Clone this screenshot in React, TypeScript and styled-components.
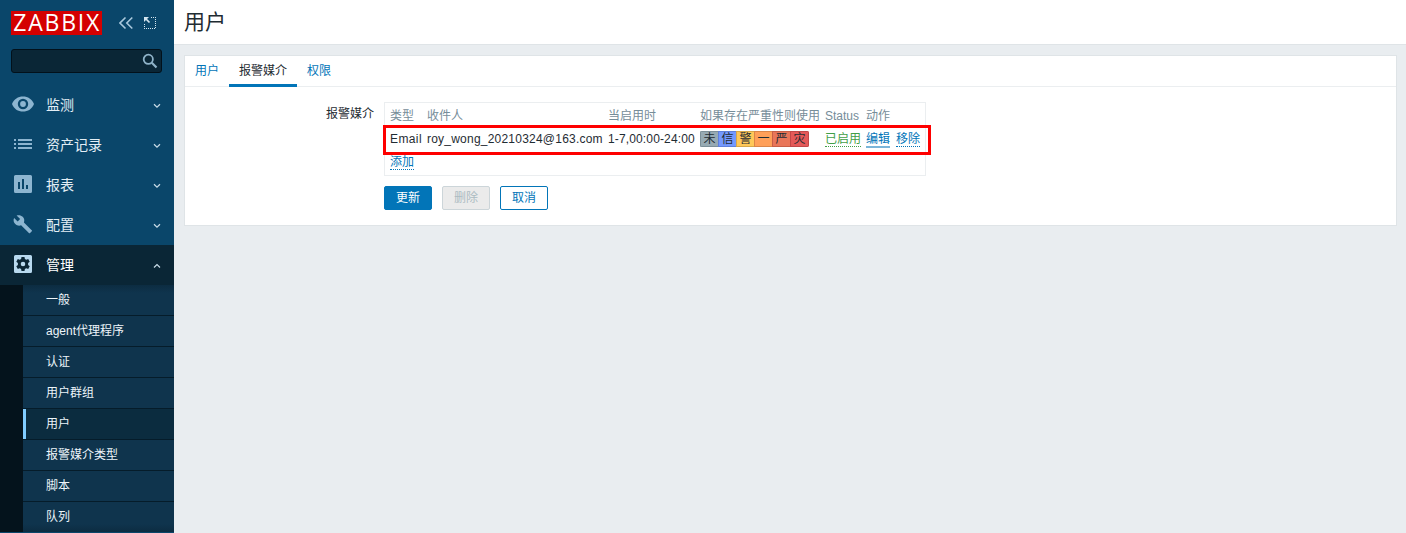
import React from "react";
import styled, { createGlobalStyle, css } from "styled-components";

const Global = createGlobalStyle`
  * { box-sizing: border-box; }
  body {
    margin: 0;
    background: #e9edf0;
    color: #1f2c33;
    font: 12px/14px "Liberation Sans", "Noto Sans CJK SC", sans-serif;
    overflow: hidden;
  }
`;

const Page = styled.div`
  display: flex;
  height: 533px;
`;
const Sidebar = styled.aside`
  flex: 0 0 174px;
  background: #0a466a;
  overflow: hidden;
`;
const Brand = styled.div`
  display: flex;
  align-items: center;
  padding: 11px 0 0 11px;
  height: 35px;
  svg { display: block; }
`;
const Logo = styled.svg`
  overflow: visible;
`;
const Collapse = styled.svg`
  margin-left: 17px;
`;
const Compact = styled.svg`
  margin-left: 10px;
`;
const Search = styled.div`
  display: flex;
  align-items: center;
  justify-content: flex-end;
  width: 151px;
  height: 24px;
  margin: 14px 0 12px 11px;
  padding-right: 3px;
  background: #0a2636;
  border: 1px solid #02111b;
  border-radius: 3px;
`;
const MenuItem = styled.div<{ $active?: boolean }>`
  display: flex;
  align-items: center;
  height: 40px;
  padding: 0 12px 0 11px;
  font-size: 14px;
  color: ${(p) => (p.$active ? "#fff" : "#e3eef5")};
  background: ${(p) => (p.$active ? "#0a2636" : "transparent")};
  fill: ${(p) => (p.$active ? "#b8d9ef" : "#8db5d0")};
`;
const MenuIcon = styled.svg`
  margin-bottom: 2px;
`;
const MenuLabel = styled.span`
  flex: 1;
  margin-left: 11px;
`;
const Submenu = styled.div`
  height: 247px;
  padding-left: 23px;
  background: #04131c;
`;
const SubItem = styled.div<{ $active?: boolean }>`
  display: flex;
  align-items: center;
  height: 31px;
  padding-left: 23px;
  border-bottom: 1px solid #051c2a;
  box-shadow: ${(p) => (p.$active ? "inset 3px 0 #80ccff" : "none")};
  background: ${(p) => (p.$active ? "#0b2c3f" : "#0f344d")};
  color: #edf5fa;
  &:first-child { background: linear-gradient(#0c2c41, #0f344d 8px); }
  &:last-child { height: 30px; border-bottom: 0; background: linear-gradient(#0f344d 22px, #0c2c41); }
`;
const Main = styled.main`
  flex: 1;
  min-width: 0;
`;
const Header = styled.header`
  height: 45px;
  padding: 10px;
  background: #fff;
  border-bottom: 1px solid #dfe4e7;
`;
const Title = styled.h1`
  margin: 0;
  font-size: 21px;
  line-height: 24px;
  font-weight: 400;
`;
const Panel = styled.section`
  height: 171px;
  margin: 10px 9px 0 10px;
  background: #fff;
  border: 1px solid #dfe4e7;
`;
const Tabs = styled.nav`
  display: flex;
  height: 31px;
  border-bottom: 1px solid #ebeef0;
`;
const Tab = styled.a<{ $active?: boolean }>`
  height: 31px;
  padding: 8px 10px 0;
  color: ${(p) => (p.$active ? "#1f2c33" : "#0275b8")};
  border-bottom: 3px solid ${(p) => (p.$active ? "#0275b8" : "transparent")};
`;
const FormRow = styled.div`
  display: flex;
  padding-top: 15px;
`;
const Label = styled.label`
  width: 189px;
  padding-top: 5px;
  text-align: right;
`;
const Media = styled.div`
  position: relative;
  width: 542px;
  height: 74px;
  margin-left: 10px;
  padding-left: 5px;
  border: 1px solid #ebeef0;
`;
const Row = styled.div<{ $head?: boolean }>`
  display: grid;
  grid-template-columns: 37px 181px 92px 125px 41px 60px;
  align-items: ${(p) => (p.$head ? "center" : "start")};
  height: ${(p) => (p.$head ? 25 : 22)}px;
  padding-top: ${(p) => (p.$head ? 0 : 3)}px;
  color: ${(p) => (p.$head ? "#768d99" : "#1f2c33")};
  white-space: nowrap;
`;
const Spaced = styled.span<{ $by: number }>`
  line-height: 16px;
  letter-spacing: ${(p) => p.$by}px;
`;
const Action = styled.a<{ $tone?: "green" | "focus" }>`
  display: block;
  width: max-content;
  height: 16px;
  line-height: 16px;
  color: #0275b8;
  border-bottom: 1px dotted #0275b8;
  ${(p) => p.$tone === "green" && css`color: #429e47; border-color: #429e47;`}
  ${(p) => p.$tone === "focus" && css`height: 17px; border-bottom: 2px solid #7ab5d9;`}
`;
const Actions = styled.div`
  display: flex;
  gap: 6px;
`;
const AddLine = styled.div`
  padding-top: 4px;
`;
const Severities = styled.div`
  display: flex;
  width: 109px;
  height: 16px;
  border-radius: 2px;
  overflow: hidden;
`;
const Severity = styled.span<{ $bg: string; $edge: string }>`
  width: 18px;
  height: 16px;
  line-height: 14px;
  text-align: center;
  background: ${(p) => p.$bg};
  border: 1px solid ${(p) => p.$edge};
  border-right-width: 0;
  &:last-child { width: 19px; border-right-width: 1px; }
`;
const Highlight = styled.div`
  position: absolute;
  left: -2px;
  top: 22px;
  width: 548px;
  height: 30px;
  border: 3px solid #fe0000;
`;
const Buttons = styled.div`
  display: flex;
  gap: 10px;
  padding: 10px 0 0 199px;
`;
const Button = styled.button<{ $kind: "primary" | "disabled" | "plain" }>`
  width: 48px;
  height: 24px;
  padding: 0;
  font: inherit;
  border-radius: 2px;
  border: 1px solid #0275b8;
  color: #0275b8;
  background: #fff;
  ${(p) => p.$kind === "primary" && css`color: #fff; background: #0275b8;`}
  ${(p) => p.$kind === "disabled" && css`color: #acbbc2; background: #ebebeb; border-color: #ccd5d9;`}
`;

const icons = {
  eye: <path fillRule="evenodd" d="M1 12C3 7 7 4.500 12 4.500S21 7 23 12c-2 5-6 7.500-11 7.500S3 17 1 12zm11-5.200a5.200 5.200 0 1 0 0 10.400 5.200 5.200 0 0 0 0-10.400zm0 2.300a2.900 2.900 0 1 1 0 5.800 2.900 2.900 0 0 1 0-5.800z" />,
  list: <path d="M3 7h2v2H3zm4 0h14v2H7zM3 11h2v2H3zm4 0h14v2H7zM3 15h2v2H3zm4 0h14v2H7z" />,
  chart: <path fillRule="evenodd" d="M4.500 3h15A1.500 1.500 0 0 1 21 4.500v15a1.500 1.500 0 0 1-1.500 1.500h-15A1.500 1.500 0 0 1 3 19.500v-15A1.500 1.500 0 0 1 4.500 3zM7 10v7h2v-7zm4-3v10h2V7zm4 6v4h2v-4z" />,
  wrench: <path d="M20.700 18.300l-7.800-7.700c.8-2 .4-4.300-1.200-5.900C10.100 3.100 7.600 2.700 5.600 3.600l3.500 3.500-2.400 2.400L3.100 6c-1 2-.5 4.500 1.200 6.100 1.600 1.600 3.900 2 5.800 1.200l7.800 7.800c.3.300.8.300 1.200 0l1.700-1.800c.4-.3.4-.8-.1-1z" />,
  gear: <path fillRule="evenodd" d="M4.500 3h15A1.500 1.500 0 0 1 21 4.500v15a1.500 1.500 0 0 1-1.500 1.500h-15A1.500 1.500 0 0 1 3 19.500v-15A1.500 1.500 0 0 1 4.500 3zM10.500 5l-.4 2-1.400.8-1.900-.7-1.500 2.600 1.600 1.400v1.800l-1.600 1.400 1.500 2.600 1.900-.7 1.400.8.400 2h3l.4-2 1.400-.8 1.900.7 1.500-2.600-1.600-1.400v-1.800l1.600-1.400-1.500-2.600-1.900.7-1.400-.8-.4-2zM12 9.700a2.300 2.300 0 1 1 0 4.600 2.300 2.300 0 0 1 0-4.600z" />,
};

const menu: { icon: keyof typeof icons; label: string; active?: boolean }[] = [
  { icon: "eye", label: "监测" },
  { icon: "list", label: "资产记录" },
  { icon: "chart", label: "报表" },
  { icon: "wrench", label: "配置" },
  { icon: "gear", label: "管理", active: true },
];
const submenu = ["一般", "agent代理程序", "认证", "用户群组", "用户", "报警媒介类型", "脚本", "队列"];
const severities = [
  ["未", "#97aab3", "#7c8f98"],
  ["信", "#7499ff", "#5e80dc"],
  ["警", "#ffc859", "#d7a748"],
  ["一", "#ffa059", "#dc8648"],
  ["严", "#e97659", "#c95f46"],
  ["灾", "#e45959", "#c24848"],
];

export default function App() {
  return (
    <>
      <Global />
      <Page>
        <Sidebar>
          <Brand>
            <Logo width="91" height="24">
              <rect width="91" height="24" fill="#d40000" />
              <text x="2.300" y="20.200" fill="#fff" fontFamily="Open Sans" fontSize="23" textLength="86" lengthAdjust="spacing">ZABBIX</text>
            </Logo>
            <Collapse width="14" height="14" fill="none" stroke="#a9c8dc" strokeWidth="1.600">
              <path d="M6.500 1.500L1 7l5.500 5.500M13.300 1.500L7.800 7l5.500 5.500" />
            </Collapse>
            <Compact width="14" height="14" fill="none" stroke="#d5e6f0">
              <path strokeDasharray="1 1" d="M8 1.500h5M12.500 3v10M1 12.500h12M1.500 8v5" />
              <path fill="#d5e6f0" stroke="none" d="M1 1h5L1 6z" />
              <path strokeWidth="1.700" d="M2.500 2.500l4 4" />
            </Compact>
          </Brand>
          <Search>
            <svg width="16" height="16" fill="none" stroke="#8fb3c9">
              <circle cx="6.300" cy="6.300" r="4.600" strokeWidth="1.800" />
              <path strokeWidth="2.200" d="M9.800 9.800l4.700 4.700" />
            </svg>
          </Search>
          {menu.map((m) => (
            <MenuItem key={m.label} $active={m.active}>
              <MenuIcon width="24" height="24" viewBox="0 0 24 24">{icons[m.icon]}</MenuIcon>
              <MenuLabel>{m.label}</MenuLabel>
              <svg width="10" height="10" fill="none">
                <path stroke="#c9dce8" strokeWidth="1.200" d={m.active ? "M2 7.500L5 4.600 8 7.500" : "M2 4.300L5 7.200l3-2.900"} />
              </svg>
            </MenuItem>
          ))}
          <Submenu>
            {submenu.map((s) => <SubItem key={s} $active={s === "用户"}>{s}</SubItem>)}
          </Submenu>
        </Sidebar>
        <Main>
          <Header><Title>用户</Title></Header>
          <Panel>
            <Tabs>
              <Tab>用户</Tab>
              <Tab $active>报警媒介</Tab>
              <Tab>权限</Tab>
            </Tabs>
            <FormRow>
              <Label>报警媒介</Label>
              <Media>
                <Row $head>
                  <span>类型</span><span>收件人</span><span>当启用时</span>
                  <span>如果存在严重性则使用</span><span>Status</span><span>动作</span>
                </Row>
                <Row>
                  <Spaced $by={0.4}>Email</Spaced>
                  <Spaced $by={0.22}>roy_wong_20210324@163.com</Spaced>
                  <Spaced $by={0.14}>1-7,00:00-24:00</Spaced>
                  <Severities>
                    {severities.map(([t, bg, edge]) => <Severity key={t} $bg={bg} $edge={edge}>{t}</Severity>)}
                  </Severities>
                  <Action $tone="green">已启用</Action>
                  <Actions><Action $tone="focus">编辑</Action><Action>移除</Action></Actions>
                </Row>
                <AddLine><Action>添加</Action></AddLine>
                <Highlight />
              </Media>
            </FormRow>
            <Buttons>
              <Button $kind="primary">更新</Button>
              <Button $kind="disabled" disabled>删除</Button>
              <Button $kind="plain">取消</Button>
            </Buttons>
          </Panel>
        </Main>
      </Page>
    </>
  );
}
